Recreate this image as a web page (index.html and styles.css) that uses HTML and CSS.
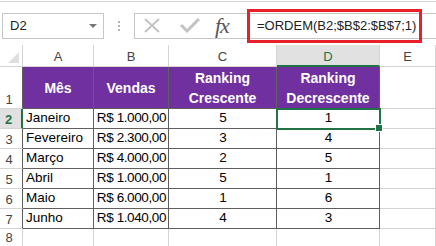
FILE: index.html
```html
<!DOCTYPE html>
<html lang="pt-BR">
<head>
  <meta charset="UTF-8" />
  <meta name="viewport" content="width=device-width, initial-scale=1.0"/>
  <title>Ranking de Vendas</title>
  <link rel="stylesheet" href="styles.css">
</head>
<body>
  <div class="formula-bar">
    <div class="name-box">
      <span>D2</span>
      <span class="caret"></span>
    </div>
    <div class="grip"><i></i><i></i><i></i></div>
    <div class="fx-buttons">
      <svg class="btn-icon" width="16" height="15" viewBox="0 0 16 15">
        <path d="M1 1 L15 14 M15 1 L1 14" stroke="#c3c3c3" stroke-width="2" fill="none"/>
      </svg>
      <svg class="btn-icon" width="20" height="15" viewBox="0 0 20 15">
        <path d="M1 7 L7 13 L19 1" stroke="#c3c3c3" stroke-width="3" fill="none"/>
      </svg>
      <span class="fx">fx</span>
    </div>
    <div class="formula">
      <span class="formula-text">=ORDEM(B2;$B$2:$B$7;1)</span>
    </div>
  </div>

  <div class="sheet">
    <div class="corner"></div>
    <div class="col-head">A</div>
    <div class="col-head">B</div>
    <div class="col-head">C</div>
    <div class="col-head current">D</div>
    <div class="col-head">E</div>

    <div class="row-head in-table">1</div>
    <div class="cell head">Mês</div>
    <div class="cell head">Vendas</div>
    <div class="cell head">Ranking<br>Crescente</div>
    <div class="cell head">Ranking<br>Decrescente</div>
    <div class="blank"></div>

    <div class="row-head in-table current">2</div>
    <div class="cell">Janeiro</div>
    <div class="cell money">R$ 1.000,00</div>
    <div class="cell num">5</div>
    <div class="cell num active">1</div>
    <div class="blank"></div>

    <div class="row-head in-table">3</div>
    <div class="cell">Fevereiro</div>
    <div class="cell money">R$ 2.300,00</div>
    <div class="cell num">3</div>
    <div class="cell num">4</div>
    <div class="blank"></div>

    <div class="row-head in-table">4</div>
    <div class="cell">Março</div>
    <div class="cell money">R$ 4.000,00</div>
    <div class="cell num">2</div>
    <div class="cell num">5</div>
    <div class="blank"></div>

    <div class="row-head in-table">5</div>
    <div class="cell">Abril</div>
    <div class="cell money">R$ 1.000,00</div>
    <div class="cell num">5</div>
    <div class="cell num">1</div>
    <div class="blank"></div>

    <div class="row-head in-table">6</div>
    <div class="cell">Maio</div>
    <div class="cell money">R$ 6.000,00</div>
    <div class="cell num">1</div>
    <div class="cell num">6</div>
    <div class="blank"></div>

    <div class="row-head in-table">7</div>
    <div class="cell">Junho</div>
    <div class="cell money">R$ 1.040,00</div>
    <div class="cell num">4</div>
    <div class="cell num">3</div>
    <div class="blank"></div>

    <div class="row-head">8</div>
    <div class="blank"></div>
    <div class="blank"></div>
    <div class="blank"></div>
    <div class="blank"></div>
    <div class="blank"></div>
  </div>
</body>
</html>
```

FILE: styles.css
```css
* {
  box-sizing: border-box;
}
body {
  margin: 0;
  width: 436px;
  height: 246px;
  overflow: hidden;
  background: #fff;
  font-family: 'Liberation Sans', Arial, sans-serif;
  color: #000;
  border-top: 1px solid #fff;
}

/* formula bar */
.formula-bar {
  display: flex;
  align-items: center;
  height: 44px;
  border-top: 1px solid #d5d5d5;
  padding: 10px 0 6px 2px;
}
.name-box {
  width: 102px;
  height: 26px;
  border: 1px solid #c6c6c6;
  display: flex;
  align-items: center;
  justify-content: space-between;
  padding: 0 6px 0 7px;
  font-size: 13px;
  color: #222;
}
.caret {
  width: 0;
  height: 0;
  border-left: 4px solid transparent;
  border-right: 4px solid transparent;
  border-top: 4px solid #777;
}
.grip {
  width: 30px;
  display: flex;
  flex-direction: column;
  align-items: center;
  gap: 2px;
}
.grip i {
  width: 2px;
  height: 2px;
  background: #b5b5b5;
}
.fx-buttons {
  width: 113px;
  height: 26px;
  border: 1px solid #c6c6c6;
  border-right: none;
  display: flex;
  align-items: center;
  padding-left: 9px;
}
.btn-icon {
  margin-right: 20px;
}
.btn-icon + .btn-icon {
  margin-right: 15px;
}
.fx {
  font-family: 'Liberation Serif', 'Times New Roman', serif;
  font-style: italic;
  font-size: 22px;
  color: #555;
  letter-spacing: -1px;
}
.formula {
  flex: 1;
  height: 26px;
  border-top: 1px solid #c6c6c6;
  border-bottom: 1px solid #c6c6c6;
  display: flex;
  align-items: center;
}
.formula-text {
  width: 175px;
  height: 34px;
  margin: -4px 0;
  border: 3px solid #e8202a;
  display: flex;
  align-items: center;
  padding-left: 7px;
  font-size: 13px;
  color: #222;
}

/* worksheet */
.sheet {
  display: grid;
  grid-template-columns: 23px 71px 75px 108px 103px 1fr;
  grid-template-rows: 22px 42px repeat(6, 20px) 1fr;
  height: 202px;
  font-size: 13.5px;
}
.sheet > div {
  border-right: 1px solid #d4d4d4;
  border-bottom: 1px solid #d4d4d4;
}
.corner {
  position: relative;
}
.corner::after {
  content: "";
  position: absolute;
  right: 3px;
  bottom: 3px;
  border-left: 11px solid transparent;
  border-bottom: 11px solid #dfdfdf;
}
.col-head {
  display: flex;
  align-items: center;
  justify-content: center;
  font-size: 13px;
  color: #444;
  padding-top: 2px;
}
.col-head.current {
  background: #e1e1e1;
  color: #217346;
  border-bottom: 2px solid #217346 !important;
}
.row-head {
  display: flex;
  align-items: flex-end;
  justify-content: center;
  padding-right: 4px;
  padding-bottom: 1px;
  font-size: 13px;
  color: #444;
}
.sheet > .row-head.in-table {
  border-right-color: #5f5f5f;
}
.sheet > .row-head.current {
  background: #e1e1e1;
  color: #217346;
  font-weight: bold;
  border-right: 2px solid #217346;
}

.sheet > .cell {
  border-color: #5f5f5f;
  display: flex;
  align-items: flex-end;
  padding: 0 2px 1px 3px;
  line-height: 18px;
  white-space: nowrap;
}
.sheet > .cell.head {
  background: #7030a0;
  color: #fff;
  font-weight: bold;
  font-size: 14px;
  align-items: center;
  justify-content: center;
  text-align: center;
  line-height: 20px;
  padding: 0;
}
.cell.money {
  justify-content: flex-end;
  letter-spacing: -0.4px;
}
.cell.num {
  justify-content: center;
}
.cell.active {
  position: relative;
  outline: 2px solid #217346;
  outline-offset: -1px;
}
.cell.active::after {
  content: "";
  position: absolute;
  right: -4px;
  bottom: -4px;
  width: 6px;
  height: 6px;
  background: #217346;
  border: 1px solid #fff;
}
```
